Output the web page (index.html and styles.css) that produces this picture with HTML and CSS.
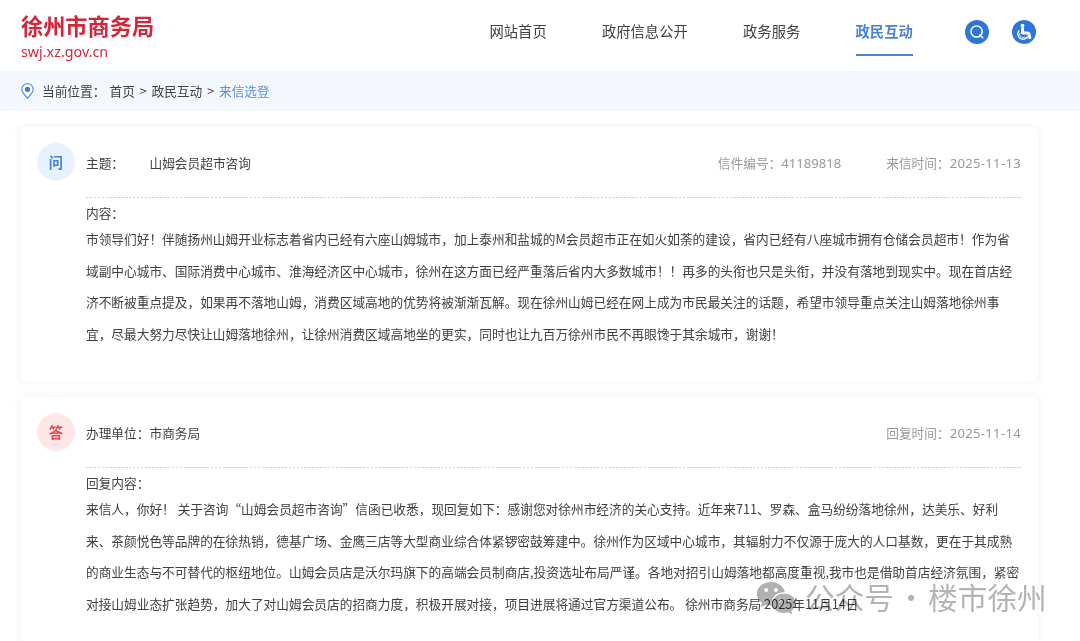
FILE: index.html
```html
<!DOCTYPE html>
<html lang="zh-CN">
<head>
  <meta charset="UTF-8">
  <title>来信选登 - 徐州市商务局</title>
  <link rel="stylesheet" href="styles.css">
</head>
<body>

  <header class="header">
    <a class="logo">
      <span class="logo-name">徐州市商务局</span>
      <span class="logo-url">swj.xz.gov.cn</span>
    </a>
    <nav class="nav">
      <a>网站首页</a>
      <a>政府信息公开</a>
      <a>政务服务</a>
      <a class="active">政民互动</a>
    </nav>
    <div class="tools">
      <svg width="24" height="24" viewBox="0 0 24 24">
        <circle cx="12" cy="12" r="12" fill="#2e76da"/>
        <circle cx="11.6" cy="11.5" r="5.6" fill="none" stroke="#fff" stroke-width="1.5"/>
        <path d="M14.7 15l3 2.8" stroke="#fff" stroke-width="1.5" stroke-linecap="round"/>
      </svg>
      <svg width="24" height="24" viewBox="0 0 24 24">
        <circle cx="12" cy="12" r="12" fill="#2e76da"/>
        <circle cx="10.5" cy="5.6" r="1.9" fill="#fff"/>
        <path d="M10.6 8.500v4.600h4.400q2 0 2.300 2.200l.5 2.300" fill="none" stroke="#fff" stroke-width="3" stroke-linecap="round" stroke-linejoin="round"/>
        <path d="M6.800 10.800a5.300 5.300 0 1 0 8.600 6.200" fill="none" stroke="#fff" stroke-width="1.4" stroke-linecap="round"/>
        <path d="M8 12.600a3.300 3.300 0 0 0 5 4.200" fill="none" stroke="#fff" stroke-width=".8"/>
      </svg>
    </div>
  </header>

  <div class="crumb">
    <svg class="pin" width="13" height="16" viewBox="0 0 13 16">
      <path d="M6.5 15.1C4.8 13 .8 9.6.8 6.4a5.7 5.7 0 0 1 11.4 0c0 3.2-4 6.6-5.7 8.7z" fill="#fff" stroke="#5b8fdc" stroke-width="1.2"/>
      <circle cx="6.5" cy="6.3" r="2.6" fill="#3d7bd6"/>
    </svg>
    <span class="crumb-label">当前位置：</span>
    <a>首页</a>
    <span class="sep">&gt;</span>
    <a>政民互动</a>
    <span class="sep">&gt;</span>
    <a class="current">来信选登</a>
  </div>

  <main class="main">
    <section class="card ask">
      <div class="badge">问</div>
      <div class="card-body">
        <div class="card-head">
          <span class="label">主题：</span>
          <span>山姆会员超市咨询</span>
          <div class="meta">
            <span>信件编号：<b>41189818</b></span>
            <span>来信时间：<b class="date">2025-11-13</b></span>
          </div>
        </div>
        <div class="content-label">内容：</div>
        <p class="content">
          市领导们好！伴随扬州山姆开业标志着省内已经有六座山姆城市，加上泰州和盐城的M会员超市正在如火如荼的建设，省内已经有八座城市拥有仓储会员超市！作为省<br>
          域副中心城市、国际消费中心城市、淮海经济区中心城市，徐州在这方面已经严重落后省内大多数城市！！再多的头衔也只是头衔，并没有落地到现实中。现在首店经<br>
          济不断被重点提及，如果再不落地山姆，消费区域高地的优势将被渐渐瓦解。现在徐州山姆已经在网上成为市民最关注的话题，希望市领导重点关注山姆落地徐州事<br>
          宜，尽最大努力尽快让山姆落地徐州，让徐州消费区域高地坐的更实，同时也让九百万徐州市民不再眼馋于其余城市，谢谢！
        </p>
      </div>
    </section>

    <section class="card answer">
      <div class="badge">答</div>
      <div class="card-body">
        <div class="card-head">
          <span class="label">办理单位：</span>
          <span>市商务局</span>
          <div class="meta">
            <span>回复时间：<b class="date">2025-11-14</b></span>
          </div>
        </div>
        <div class="content-label">回复内容：</div>
        <p class="content">
          来信人，你好！ 关于咨询“山姆会员超市咨询”信函已收悉，现回复如下：感谢您对徐州市经济的关心支持。近年来711、罗森、盒马纷纷落地徐州，达美乐、好利<br>
          来、茶颜悦色等品牌的在徐热销，德基广场、金鹰三店等大型商业综合体紧锣密鼓筹建中。徐州作为区域中心城市，其辐射力不仅源于庞大的人口基数，更在于其成熟<br>
          的商业生态与不可替代的枢纽地位。山姆会员店是沃尔玛旗下的高端会员制商店,投资选址布局严谨。各地对招引山姆落地都高度重视,我市也是借助首店经济氛围，紧密<br>
          对接山姆业态扩张趋势，加大了对山姆会员店的招商力度，积极开展对接，项目进展将通过官方渠道公布。 徐州市商务局 2025年11月14日
        </p>
      </div>
    </section>
  </main>

  <div class="watermark">
    <svg width="40" height="34" viewBox="0 0 40 34">
      <path fill-rule="evenodd" d="M15 1C7 1 .8 6.200.8 12.800c0 3.800 2 7 5.200 9.200l-1.400 4.200 5-2.500c1.800.5 3.500.8 5.400.8h.9C14.200 17 20 11 28.900 11.200 27.500 5.300 21.800 1 15 1zM10.200 7a2 2 0 1 1 0 4 2 2 0 0 1 0-4zm9.700 0a2 2 0 1 1 0 4 2 2 0 0 1 0-4z"/>
      <path fill-rule="evenodd" d="M28 12.500c-6.500 0-11.400 4.300-11.400 9.700S21.500 32 28 32c1.500 0 3-.3 4.300-.7l4.100 2.200-1.100-3.600c2.500-1.900 4.100-4.600 4.100-7.700 0-5.400-4.900-9.700-11.400-9.700zM24.300 17.500a1.500 1.500 0 1 1 0 3 1.500 1.500 0 0 1 0-3zm7.500 0a1.500 1.500 0 1 1 0 3 1.500 1.500 0 0 1 0-3z"/>
    </svg>
    <span class="wm-type">公众号</span>
    <span class="wm-dot">·</span>
    <span class="wm-name">楼市徐州</span>
  </div>

</body>
</html>
```
FILE: styles.css
```css
* {
  margin: 0;
  padding: 0;
  box-sizing: border-box;
}

body {
  height: 641px;
  overflow: hidden;
  background: #fff;
  color: #404040;
  font-family: "Noto Sans CJK SC", sans-serif;
  font-size: 12.69px;
}

.header {
  display: flex;
  height: 71px;
  padding-left: 21px;
}

.logo {
  width: 468.500px;
  padding-top: 10px;
  color: #d0273d;
}

.logo-name,
.logo-url {
  display: block;
}

.logo-name {
  font-size: 22.2px;
  font-weight: bold;
  line-height: 31px;
}

.logo-url {
  font-family: "Noto Sans", sans-serif;
  font-size: 14.3px;
  line-height: 21px;
}

.nav {
  display: flex;
  gap: 55.300px;
  font-size: 14.3px;
  line-height: 20px;
  padding-top: 21px;
}

.nav a {
  height: 35px;
}

.nav .active {
  color: #4a82d8;
  font-weight: bold;
  border-bottom: 2px solid #4a82d8;
}

.tools {
  display: flex;
  gap: 23.500px;
  padding: 20px 0 0 52px;
}

.crumb {
  display: flex;
  align-items: center;
  height: 40px;
  padding: 0 0 2px 21px;
  background: #f4f8fe;
}

.crumb-label {
  width: 67.500px;
  margin-left: 8px;
}

.pin {
  margin-top: 2px;
}

.sep {
  width: 16.700px;
  text-align: center;
}

.crumb .current {
  color: #5b8fdc;
}

.main {
  padding: 16px 43px 0 21px;
}

.card {
  display: flex;
  height: 254px;
  margin-bottom: 16px;
  padding: 16px 16px 0;
  background: #fff;
  box-shadow: 0 0 8px rgba(70, 110, 190, 0.1);
}

.badge {
  width: 38px;
  height: 38px;
  margin-right: 11px;
  border-radius: 50%;
  font-size: 14.3px;
  font-weight: bold;
  line-height: 38px;
  text-align: center;
}

.ask .badge {
  background: #e6f3ff;
  color: #4a82d8;
}

.answer .badge {
  background: #ffe6e8;
  color: #e5484f;
}

.card-body {
  flex: 1;
  white-space: nowrap;
}

.card-head {
  display: flex;
  height: 55px;
  line-height: 40px;
  background: repeating-linear-gradient(90deg, #cfd6e1 0, #cfd6e1 2.5px, #fff 2.5px, #fff 3.9px) bottom / 100% 1px no-repeat;
}

.label {
  width: 63.500px;
}

.meta {
  display: flex;
  gap: 45px;
  margin-left: auto;
  color: #999;
}

.meta b {
  font-family: "Noto Sans", sans-serif;
  font-size: 13.100px;
  font-weight: normal;
}

.meta .date {
  letter-spacing: 0.300px;
}

.content-label {
  padding-top: 5px;
  line-height: 20px;
}

.content {
  line-height: 31.700px;
}

/* account mark laid over the bottom corner */
.watermark {
  position: absolute;
  left: 756px;
  top: 581px;
  display: flex;
  color: #b4b4b4;
  fill: #b0b0b0;
  font-size: 29.700px;
  line-height: 31px;
  mix-blend-mode: multiply;
}

.wm-type {
  margin-left: 9px;
}

.wm-dot {
  width: 34px;
  text-align: center;
}
```
